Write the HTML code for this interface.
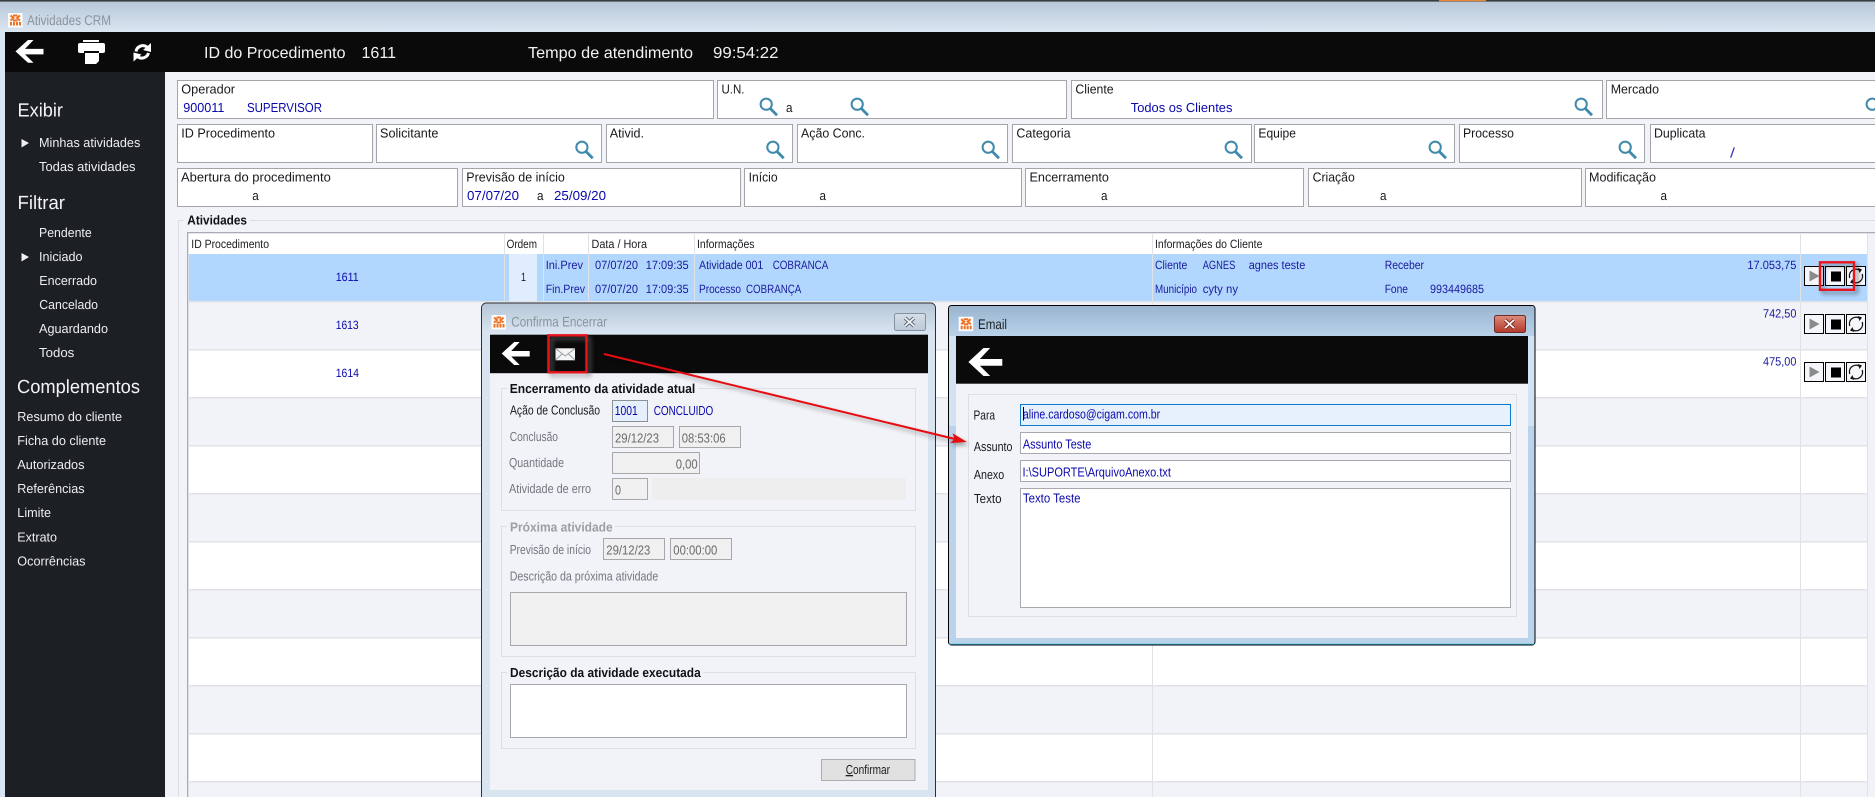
<!DOCTYPE html>
<html lang="pt-BR"><head><meta charset="utf-8"><title>Atividades CRM</title>
<style>
html,body{margin:0;padding:0;background:#f2f3f8;width:1875px;height:797px;overflow:hidden}
svg{display:block;font-family:"Liberation Sans",Arial,sans-serif;text-rendering:geometricPrecision}
.w{fill:#eceef1;font-size:13px}
.h{fill:#f2f3f5;font-size:19px}
.b{fill:#f0f1f3;font-size:16px}
.l{fill:#16181c;font-size:13px}
.v{fill:#0a08ac;font-size:13px}
.t{fill:#1c1c20;font-size:12px}
.c{fill:#0a08ac;font-size:12px}
.n{fill:#1a1a9c;font-size:12px}
.g{fill:#73777d;font-size:13px}
.i{fill:#6a6a6a;font-size:13px}
.k{fill:#101114;font-size:13px;font-weight:bold}
</style></head><body>
<svg width="1875" height="797" viewBox="0 0 1875 797" xmlns="http://www.w3.org/2000/svg">
<defs>
<linearGradient id="tb" x1="0" y1="0" x2="0" y2="1"><stop offset="0" stop-color="#b6c6d6"/><stop offset="1" stop-color="#dae6f2"/></linearGradient>
<linearGradient id="tb2" x1="0" y1="0" x2="0" y2="1"><stop offset="0" stop-color="#9ab4cf"/><stop offset="1" stop-color="#b9d2ea"/></linearGradient>
<linearGradient id="cg" x1="0" y1="0" x2="0" y2="1"><stop offset="0" stop-color="#d6dfe9"/><stop offset="1" stop-color="#bcc9d7"/></linearGradient>
<linearGradient id="cr" x1="0" y1="0" x2="0" y2="1"><stop offset="0" stop-color="#dd8d80"/><stop offset=".5" stop-color="#c9604f"/><stop offset="1" stop-color="#b23a2c"/></linearGradient>
<g id="mag"><circle cx="7.2" cy="7.2" r="5.6" fill="none" stroke="#3f8aac" stroke-width="2"/><path d="M11.2 11.4L18 18.2" stroke="#3f8aac" stroke-width="2.8"/></g>
<path id="arr" d="M0 11.5L12.5 0H18L9.5 9H28V14.5H9.5L18 23H12.5Z" fill="#fff"/>
<g id="logo"><rect width="14.5" height="14.5" fill="#fbfcfd"/><path d="M2.5 2.5l3 2.5-3 2.500M12 2.5l-3 2.5 3 2.500M5 2.5h4.500M5 7.500h4.500M3 12.500v-3.500M6 12.500v-3.500M9 12.500v-3.500M12 12.500v-3.500" fill="none" stroke="#f0701e" stroke-width="2"/></g>
<g id="play"><rect x=".5" y=".5" width="19" height="19" fill="#f5f6fa" stroke="#000"/><path d="M5.5 4.5L15.5 10 5.5 15.5Z" fill="#8b8b8b"/></g>
<g id="stop"><rect x=".5" y=".5" width="19" height="19" fill="#f5f6fa" stroke="#000"/><rect x="6" y="5.5" width="10" height="10" fill="#000"/></g>
<g id="sync"><rect x=".5" y=".5" width="19" height="19" fill="#f5f6fa" stroke="#000"/><path d="M3.8 12A6.6 6.6 0 0 1 13.5 4.2M16.2 8A6.6 6.6 0 0 1 6.500 15.800" fill="none" stroke="#111" stroke-width="1.300"/><path d="M12 2L16 3.5 13.5 7ZM8 18L4 16.500 6.500 13Z" fill="#111"/></g>
</defs>

<!-- window chrome -->
<rect width="1875" height="797" fill="#f2f3f8"/>
<rect width="1875" height="32" fill="url(#tb)"/>
<rect width="1875" height="1.600" fill="#3a3d40"/>
<rect x="1439" width="47" height="1.200" fill="#e8893a"/>
<rect y="32" width="5" height="765" fill="#d8e5f2"/>
<use href="#logo" x="8" y="13"/>
<text x="27" y="25" font-size="14" fill="#8c949d" textLength="84" lengthAdjust="spacingAndGlyphs">Atividades CRM</text>

<!-- header bar -->
<rect x="5" y="32" width="1870" height="40" fill="#0a0a0b"/>
<use href="#arr" transform="translate(15.5 40) scale(1 .99)"/>
<path d="M83 40h16v2H83zM80 43h23a2 2 0 0 1 2 2v6a2 2 0 0 1-2 2h-4v-2H84v2h-4a2 2 0 0 1-2-2v-6a2 2 0 0 1 2-2zM85 53h14v8l-3 3H85z" fill="#fff"/>
<path d="M136 51.5A7 7 0 0 1 147 47M148.5 53A7 7 0 0 1 138 57" fill="none" stroke="#fff" stroke-width="3"/>
<path d="M151 43v9l-8-2zM133.5 61.5v-9l8 2z" fill="#fff"/>
<g class="b">
<text x="204" y="58" textLength="141.500" lengthAdjust="spacingAndGlyphs">ID do Procedimento</text>
<text x="361.500" y="58" textLength="34.500" lengthAdjust="spacingAndGlyphs">1611</text>
<text x="528" y="58" textLength="165" lengthAdjust="spacingAndGlyphs">Tempo de atendimento</text>
<text x="713" y="58" textLength="65.500" lengthAdjust="spacingAndGlyphs">99:54:22</text>
</g>

<!-- sidebar -->
<rect x="5" y="72" width="160" height="725" fill="#1c1f24"/>
<g class="h">
<text x="17.500" y="116.500" textLength="45.500" lengthAdjust="spacingAndGlyphs">Exibir</text>
<text x="17.500" y="209" textLength="47.500" lengthAdjust="spacingAndGlyphs">Filtrar</text>
<text x="17" y="393" textLength="123" lengthAdjust="spacingAndGlyphs">Complementos</text>
</g>
<path d="M21.500 139L29 143 21.500 147.500ZM21.500 253L29 257 21.500 261.500Z" fill="#f0f1f3"/>
<g class="w">
<text x="39" y="147" textLength="101.300" lengthAdjust="spacingAndGlyphs">Minhas atividades</text>
<text x="39" y="171" textLength="96.500" lengthAdjust="spacingAndGlyphs">Todas atividades</text>
<text x="39" y="237" textLength="52.700" lengthAdjust="spacingAndGlyphs">Pendente</text>
<text x="39" y="261" textLength="43.500" lengthAdjust="spacingAndGlyphs">Iniciado</text>
<text x="39.300" y="285" textLength="57.700" lengthAdjust="spacingAndGlyphs">Encerrado</text>
<text x="39.300" y="309" textLength="58.700" lengthAdjust="spacingAndGlyphs">Cancelado</text>
<text x="39" y="333" textLength="69" lengthAdjust="spacingAndGlyphs">Aguardando</text>
<text x="39" y="357" textLength="35.300" lengthAdjust="spacingAndGlyphs">Todos</text>
<text x="17.300" y="421" textLength="104.700" lengthAdjust="spacingAndGlyphs">Resumo do cliente</text>
<text x="17.300" y="445" textLength="88.700" lengthAdjust="spacingAndGlyphs">Ficha do cliente</text>
<text x="17.300" y="469" textLength="67.200" lengthAdjust="spacingAndGlyphs">Autorizados</text>
<text x="17.300" y="493" textLength="67.200" lengthAdjust="spacingAndGlyphs">Referências</text>
<text x="17.300" y="517" textLength="33.700" lengthAdjust="spacingAndGlyphs">Limite</text>
<text x="17.300" y="541.500" textLength="39.700" lengthAdjust="spacingAndGlyphs">Extrato</text>
<text x="17.300" y="565.500" textLength="68.200" lengthAdjust="spacingAndGlyphs">Ocorrências</text>
</g>

<!-- filter boxes -->
<g fill="#fff" stroke="#a3a5a8">
<rect x="177.500" y="80.500" width="536" height="38"/>
<rect x="717.500" y="80.500" width="349" height="38"/>
<rect x="1071.500" y="80.500" width="531" height="38"/>
<rect x="1606.500" y="80.500" width="280" height="38"/>
<rect x="177.500" y="124.500" width="195" height="38"/>
<rect x="376.500" y="124.500" width="225" height="38"/>
<rect x="606.500" y="124.500" width="186" height="38"/>
<rect x="797.500" y="124.500" width="210" height="38"/>
<rect x="1012.500" y="124.500" width="239" height="38"/>
<rect x="1254.500" y="124.500" width="200" height="38"/>
<rect x="1459.500" y="124.500" width="185" height="38"/>
<rect x="1650.500" y="124.500" width="240" height="38"/>
<rect x="177.500" y="168.500" width="280" height="38"/>
<rect x="462.500" y="168.500" width="278" height="38"/>
<rect x="744.500" y="168.500" width="277" height="38"/>
<rect x="1025.500" y="168.500" width="278" height="38"/>
<rect x="1308.500" y="168.500" width="273" height="38"/>
<rect x="1585.500" y="168.500" width="300" height="38"/>
</g>
<g class="l">
<text x="181.300" y="93.300" textLength="53.700" lengthAdjust="spacingAndGlyphs">Operador</text>
<text x="721.500" y="93.300" textLength="23" lengthAdjust="spacingAndGlyphs">U.N.</text>
<text x="786" y="112" textLength="6.500" lengthAdjust="spacingAndGlyphs">a</text>
<text x="1075.400" y="93.300" textLength="38.200" lengthAdjust="spacingAndGlyphs">Cliente</text>
<text x="1610.700" y="93.300" textLength="48.300" lengthAdjust="spacingAndGlyphs">Mercado</text>
<text x="181.300" y="137.300" textLength="93.700" lengthAdjust="spacingAndGlyphs">ID Procedimento</text>
<text x="380" y="137.300" textLength="58.400" lengthAdjust="spacingAndGlyphs">Solicitante</text>
<text x="609.800" y="137.300" textLength="34.200" lengthAdjust="spacingAndGlyphs">Ativid.</text>
<text x="801" y="137.300" textLength="64" lengthAdjust="spacingAndGlyphs">Ação Conc.</text>
<text x="1016.400" y="137.300" textLength="54.200" lengthAdjust="spacingAndGlyphs">Categoria</text>
<text x="1258.400" y="137.300" textLength="37.600" lengthAdjust="spacingAndGlyphs">Equipe</text>
<text x="1463" y="137.300" textLength="51" lengthAdjust="spacingAndGlyphs">Processo</text>
<text x="1654" y="137.300" textLength="51.500" lengthAdjust="spacingAndGlyphs">Duplicata</text>
<text x="181" y="181.300" textLength="149.800" lengthAdjust="spacingAndGlyphs">Abertura do procedimento</text>
<text x="252.300" y="200" textLength="6.500" lengthAdjust="spacingAndGlyphs">a</text>
<text x="466.300" y="181.300" textLength="98.500" lengthAdjust="spacingAndGlyphs">Previsão de início</text>
<text x="537" y="200" textLength="6.500" lengthAdjust="spacingAndGlyphs">a</text>
<text x="748.600" y="181.300" textLength="29" lengthAdjust="spacingAndGlyphs">Início</text>
<text x="819.500" y="200" textLength="6.500" lengthAdjust="spacingAndGlyphs">a</text>
<text x="1029.500" y="181.300" textLength="79.400" lengthAdjust="spacingAndGlyphs">Encerramento</text>
<text x="1101" y="200" textLength="6.500" lengthAdjust="spacingAndGlyphs">a</text>
<text x="1312.600" y="181.300" textLength="42.200" lengthAdjust="spacingAndGlyphs">Criação</text>
<text x="1380" y="200" textLength="6.500" lengthAdjust="spacingAndGlyphs">a</text>
<text x="1589" y="181.300" textLength="67" lengthAdjust="spacingAndGlyphs">Modificação</text>
<text x="1660.500" y="200" textLength="6.500" lengthAdjust="spacingAndGlyphs">a</text>
</g>
<g class="v">
<text x="183.300" y="112" textLength="41.100" lengthAdjust="spacingAndGlyphs">900011</text>
<text x="247" y="112" textLength="75" lengthAdjust="spacingAndGlyphs">SUPERVISOR</text>
<text x="1130.800" y="112" textLength="101.600" lengthAdjust="spacingAndGlyphs">Todos os Clientes</text>
<text x="467" y="200" textLength="52" lengthAdjust="spacingAndGlyphs">07/07/20</text>
<text x="554" y="200" textLength="52" lengthAdjust="spacingAndGlyphs">25/09/20</text>
</g>
<text x="1730" y="157.500" font-size="14" font-weight="normal" fill="#3a38c0" textLength="5" lengthAdjust="spacingAndGlyphs">/</text>
<use href="#mag" x="759" y="97"/><use href="#mag" x="850" y="97"/><use href="#mag" x="1574" y="97"/><use href="#mag" x="1865" y="97"/>
<use href="#mag" x="574.700" y="140"/><use href="#mag" x="765.700" y="140"/><use href="#mag" x="981" y="140"/><use href="#mag" x="1224" y="140"/><use href="#mag" x="1428" y="140"/><use href="#mag" x="1618" y="140"/>

<!-- activities group -->
<path d="M178.500 797V220.500H1875" fill="none" stroke="#dcdee2"/>
<rect x="184" y="212" width="66" height="16" fill="#f2f3f8"/>
<text x="187.300" y="224.700" class="k" textLength="59.700" lengthAdjust="spacingAndGlyphs">Atividades</text>

<!-- table -->
<rect x="188" y="233" width="1679" height="21" fill="#fff"/>
<rect x="189" y="254" width="1678" height="47" fill="#b2d7ff"/>
<rect x="509" y="254" width="28" height="47" fill="#dfedfe"/>
<g fill="#fff"><rect x="189" y="350" width="1678" height="47"/><rect x="189" y="446" width="1678" height="47"/><rect x="189" y="542" width="1678" height="47"/><rect x="189" y="638" width="1678" height="47"/><rect x="189" y="734" width="1678" height="47"/></g>
<g fill="#e2e3e7"><rect x="189" y="301" width="1678" height="1.500"/><rect x="189" y="349" width="1678" height="1.500"/><rect x="189" y="397" width="1678" height="1.500"/><rect x="189" y="445" width="1678" height="1.500"/><rect x="189" y="493" width="1678" height="1.500"/><rect x="189" y="541" width="1678" height="1.500"/><rect x="189" y="589" width="1678" height="1.500"/><rect x="189" y="637" width="1678" height="1.500"/><rect x="189" y="685" width="1678" height="1.500"/><rect x="189" y="733" width="1678" height="1.500"/><rect x="189" y="781" width="1678" height="1.500"/></g>
<g fill="#e0e2e6"><rect x="504" y="234" width="1" height="563"/><rect x="543" y="234" width="1" height="563"/><rect x="588" y="234" width="1" height="67"/><rect x="694" y="234" width="1" height="67"/><rect x="1152" y="234" width="1" height="563"/><rect x="1800" y="234" width="1" height="563"/><rect x="1867" y="234" width="1" height="563"/></g>
<rect x="187" y="232" width="1688" height="1.300" fill="#a9acb4"/>
<rect x="187" y="232" width="1.300" height="565" fill="#a9acb4"/>
<g class="t">
<text x="191.300" y="248" textLength="77.700" lengthAdjust="spacingAndGlyphs">ID Procedimento</text>
<text x="506.600" y="248" textLength="30.400" lengthAdjust="spacingAndGlyphs">Ordem</text>
<text x="591.500" y="248" textLength="55.500" lengthAdjust="spacingAndGlyphs">Data / Hora</text>
<text x="697" y="248" textLength="57.500" lengthAdjust="spacingAndGlyphs">Informações</text>
<text x="1155" y="248" textLength="107.400" lengthAdjust="spacingAndGlyphs">Informações do Cliente</text>
<text x="521" y="281" textLength="5" lengthAdjust="spacingAndGlyphs">1</text>
</g>
<g class="c">
<text x="335.700" y="281" textLength="23" lengthAdjust="spacingAndGlyphs">1611</text>
<text x="335.700" y="329" textLength="23" lengthAdjust="spacingAndGlyphs">1613</text>
<text x="335.700" y="377" textLength="23.300" lengthAdjust="spacingAndGlyphs">1614</text>
</g>
<g class="n">
<text x="545.700" y="269" textLength="37.300" lengthAdjust="spacingAndGlyphs">Ini.Prev</text>
<text x="595" y="269" textLength="43" lengthAdjust="spacingAndGlyphs">07/07/20</text>
<text x="645.700" y="269" textLength="43" lengthAdjust="spacingAndGlyphs">17:09:35</text>
<text x="699" y="269" textLength="64.300" lengthAdjust="spacingAndGlyphs">Atividade 001</text>
<text x="772.700" y="269" textLength="55.600" lengthAdjust="spacingAndGlyphs">COBRANCA</text>
<text x="545.700" y="293" textLength="39.300" lengthAdjust="spacingAndGlyphs">Fin.Prev</text>
<text x="595" y="293" textLength="43" lengthAdjust="spacingAndGlyphs">07/07/20</text>
<text x="645.700" y="293" textLength="43" lengthAdjust="spacingAndGlyphs">17:09:35</text>
<text x="699" y="293" textLength="42" lengthAdjust="spacingAndGlyphs">Processo</text>
<text x="746" y="293" textLength="55.300" lengthAdjust="spacingAndGlyphs">COBRANÇA</text>
<text x="1155" y="269" textLength="32.300" lengthAdjust="spacingAndGlyphs">Cliente</text>
<text x="1202.700" y="269" textLength="32.600" lengthAdjust="spacingAndGlyphs">AGNES</text>
<text x="1248.700" y="269" textLength="56.600" lengthAdjust="spacingAndGlyphs">agnes teste</text>
<text x="1384.700" y="269" textLength="39.300" lengthAdjust="spacingAndGlyphs">Receber</text>
<text x="1155" y="293" textLength="42" lengthAdjust="spacingAndGlyphs">Município</text>
<text x="1202.700" y="293" textLength="35.300" lengthAdjust="spacingAndGlyphs">cyty ny</text>
<text x="1384.700" y="293" textLength="23.300" lengthAdjust="spacingAndGlyphs">Fone</text>
<text x="1430" y="293" textLength="54" lengthAdjust="spacingAndGlyphs">993449685</text>
<text x="1747.400" y="269" textLength="49" lengthAdjust="spacingAndGlyphs">17.053,75</text>
<text x="1763" y="317.300" textLength="33.400" lengthAdjust="spacingAndGlyphs">742,50</text>
<text x="1763" y="365.300" textLength="33.400" lengthAdjust="spacingAndGlyphs">475,00</text>
</g>
<use href="#play" x="1804" y="266"/><use href="#stop" x="1825" y="266"/><use href="#sync" x="1846" y="266"/>
<use href="#play" x="1804" y="314"/><use href="#stop" x="1825" y="314"/><use href="#sync" x="1846" y="314"/>
<use href="#play" x="1804" y="362"/><use href="#stop" x="1825" y="362"/><use href="#sync" x="1846" y="362"/>
<rect x="1820" y="262.300" width="34" height="27.500" fill="none" stroke="#e8141c" stroke-width="2.400" style="filter:drop-shadow(3px 3px 2px rgba(0,0,0,.45))"/>

<!-- dialog: Confirma Encerrar -->
<path d="M481.500 800V308a5 5 0 0 1 5-5H930.500a5 5 0 0 1 5 5V800Z" fill="#d8e4f0" stroke="#2c2f33"/>
<path d="M482 334V308a4.500 4.500 0 0 1 4.500-4.500H930.500a4.500 4.500 0 0 1 4.500 4.500V334Z" fill="url(#tb)"/>
<rect x="490" y="373" width="438" height="417" fill="#f2f3f8"/>
<use href="#logo" x="491.500" y="315"/>
<text x="511.300" y="326.700" font-size="14" fill="#8c949d" textLength="95.700" lengthAdjust="spacingAndGlyphs">Confirma Encerrar</text>
<rect x="894.500" y="313.500" width="31" height="17" rx="2" fill="url(#cg)" stroke="#8391a2"/>
<path d="M905 318l9 8M914 318l-9 8" stroke="#5a6470" stroke-width="3.600"/><path d="M905 318l9 8M914 318l-9 8" stroke="#f4f6f8" stroke-width="1.800"/>
<rect x="490" y="334.700" width="438" height="38.500" fill="#0a0a0b"/>
<use href="#arr" transform="translate(501.700 342)"/>
<rect x="555.500" y="348.300" width="19.500" height="12" fill="#f4f5f6"/>
<path d="M555.500 348.500L565.200 356 575 348.500M555.500 360L562 354M575 360L568.500 354" fill="none" stroke="#9a9ca0"/>
<rect x="548.500" y="335.300" width="38" height="37" fill="none" stroke="#e8141c" stroke-width="2.400" style="filter:drop-shadow(3px 3px 2px rgba(120,120,120,.7))"/>

<g fill="none" stroke="#dcdfe3">
<rect x="501.500" y="388.500" width="414" height="122"/>
<rect x="501.500" y="526.500" width="414" height="130"/>
<rect x="501.500" y="672.500" width="414" height="76"/>
</g>
<g fill="#f2f3f8"><rect x="507" y="382" width="191" height="13"/><rect x="507" y="520" width="108" height="13"/><rect x="507" y="666" width="196" height="13"/></g>
<text x="509.700" y="393" class="k" textLength="185.600" lengthAdjust="spacingAndGlyphs">Encerramento da atividade atual</text>
<text x="510" y="531.500" class="k" style="fill:#9b9ea3" textLength="102.700" lengthAdjust="spacingAndGlyphs">Próxima atividade</text>
<text x="510" y="677" class="k" textLength="190.700" lengthAdjust="spacingAndGlyphs">Descrição da atividade executada</text>
<text x="510" y="414.700" class="l" textLength="90" lengthAdjust="spacingAndGlyphs">Ação de Conclusão</text>
<rect x="612.500" y="400.500" width="35" height="21" fill="#e6f0fc" stroke="#8b8f96"/>
<text x="614.700" y="415" class="v" textLength="23" lengthAdjust="spacingAndGlyphs">1001</text>
<text x="653.700" y="415" class="v" textLength="59.600" lengthAdjust="spacingAndGlyphs">CONCLUIDO</text>
<g fill="#f0f0f0" stroke="#a8a8a8">
<rect x="612.500" y="426.500" width="61" height="21"/><rect x="679.500" y="426.500" width="61" height="21"/>
<rect x="612.500" y="452.500" width="87" height="21"/>
<rect x="612.500" y="478.500" width="35" height="21"/>
<rect x="603.500" y="538.500" width="61" height="21"/><rect x="670.500" y="538.500" width="61" height="21"/>
<rect x="510.500" y="592.500" width="396" height="53"/>
</g>
<rect x="652.300" y="478" width="253.700" height="22" fill="#eeeeee"/>
<g class="g">
<text x="509.700" y="441" textLength="48.300" lengthAdjust="spacingAndGlyphs">Conclusão</text>
<text x="509" y="467" textLength="55" lengthAdjust="spacingAndGlyphs">Quantidade</text>
<text x="509" y="493" textLength="82" lengthAdjust="spacingAndGlyphs">Atividade de erro</text>
<text x="509.700" y="554" textLength="81.300" lengthAdjust="spacingAndGlyphs">Previsão de início</text>
<text x="509.700" y="580.700" textLength="148.600" lengthAdjust="spacingAndGlyphs">Descrição da próxima atividade</text>
</g>
<g class="i">
<text x="615" y="442.300" textLength="44" lengthAdjust="spacingAndGlyphs">29/12/23</text>
<text x="681.700" y="442.300" textLength="44" lengthAdjust="spacingAndGlyphs">08:53:06</text>
<text x="675.700" y="468.300" textLength="22" lengthAdjust="spacingAndGlyphs">0,00</text>
<text x="615" y="494.300" textLength="6" lengthAdjust="spacingAndGlyphs">0</text>
<text x="606.300" y="554.500" textLength="44" lengthAdjust="spacingAndGlyphs">29/12/23</text>
<text x="673.300" y="554.500" textLength="44" lengthAdjust="spacingAndGlyphs">00:00:00</text>
</g>
<rect x="510.500" y="684.500" width="396" height="53" fill="#fff" stroke="#a8a8ae"/>
<rect x="821.500" y="759.500" width="93.500" height="21" fill="#e1e1e1" stroke="#adadad"/>
<text x="845.700" y="774" class="t" style="font-size:13px" textLength="44.300" lengthAdjust="spacingAndGlyphs"><tspan text-decoration="underline">C</tspan>onfirmar</text>

<!-- dialog: Email -->
<rect x="948.500" y="305.500" width="586.500" height="339.500" rx="3" fill="#bad2ea" stroke="#000"/>
<path d="M949 336V309a3 3 0 0 1 3-3H1532a3 3 0 0 1 2.500 3V336Z" fill="url(#tb2)"/>
<rect x="949" y="336" width="7" height="90" fill="#d3e2f1"/><rect x="1528" y="336" width="6.500" height="90" fill="#d3e2f1"/>
<rect x="956" y="383" width="572" height="255" fill="#f2f3f8"/>
<rect x="949" y="643.700" width="585.500" height=".8" fill="#39c3e0"/>
<use href="#logo" x="958.700" y="316.700"/>
<text x="978" y="329" font-size="14" fill="#1e2226" textLength="29" lengthAdjust="spacingAndGlyphs">Email</text>
<rect x="1494.500" y="315.500" width="31" height="17" rx="2" fill="url(#cr)" stroke="#6e2a26"/>
<path d="M1505 320l9 8M1514 320l-9 8" stroke="#7a2a22" stroke-width="3.600"/><path d="M1505 320l9 8M1514 320l-9 8" stroke="#fbf4f2" stroke-width="1.800"/>
<rect x="956" y="336" width="572" height="47.700" fill="#0a0a0b"/>
<use href="#arr" transform="translate(968.400 348) scale(1.210 1.220)"/>
<rect x="968.500" y="394.500" width="548" height="222" fill="none" stroke="#dcdfe3"/>
<rect x="1020.500" y="404.500" width="490" height="21" fill="#e6f1fd" stroke="#0a7ad6"/>
<g fill="#fff" stroke="#a8a8ae">
<rect x="1020.500" y="432.500" width="490" height="21"/>
<rect x="1020.500" y="460.500" width="490" height="21"/>
<rect x="1020.500" y="488.500" width="490" height="119"/>
</g>
<g class="l">
<text x="973.500" y="419.300" textLength="21.500" lengthAdjust="spacingAndGlyphs">Para</text>
<text x="973.900" y="451" textLength="38.500" lengthAdjust="spacingAndGlyphs">Assunto</text>
<text x="973.900" y="479" textLength="30.300" lengthAdjust="spacingAndGlyphs">Anexo</text>
<text x="973.900" y="503" textLength="27.600" lengthAdjust="spacingAndGlyphs">Texto</text>
</g>
<g class="v">
<text x="1022.900" y="418.300" textLength="137.300" lengthAdjust="spacingAndGlyphs">aline.cardoso@cigam.com.br</text>
<text x="1022.900" y="448.300" textLength="68.500" lengthAdjust="spacingAndGlyphs">Assunto Teste</text>
<text x="1022.500" y="476.300" textLength="148.500" lengthAdjust="spacingAndGlyphs">I:\SUPORTE\ArquivoAnexo.txt</text>
<text x="1022.900" y="502.300" textLength="57.600" lengthAdjust="spacingAndGlyphs">Texto Teste</text>
</g>
<rect x="1023" y="407" width="1" height="13.500" fill="#000"/>

<!-- red callout arrow -->
<g style="filter:drop-shadow(2px 3px 2px rgba(0,0,0,.35))">
<path d="M604 354L955 439" stroke="#e60d12" stroke-width="2"/>
<path d="M967 442L952.600 433.300 954.500 439 950.200 443.100Z" fill="#e60d12"/>
</g>
</svg>
</body></html>
